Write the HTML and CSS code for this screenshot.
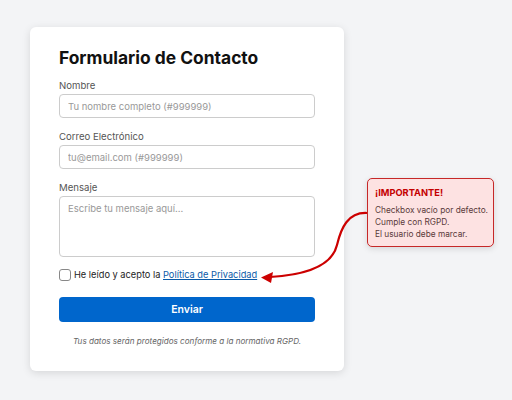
FILE: index.html
```html
<!DOCTYPE html>
<html lang="es">
<head>
  <meta charset="UTF-8">
  <title>Formulario de Contacto</title>
  <meta name="viewport" content="width=device-width, initial-scale=1.0">
  <link rel="stylesheet" href="styles.css">
</head>
<body>

  <div class="page">
    <!-- Formulario -->
    <div class="form-card">
      <h2>Formulario de Contacto</h2>
      <form id="contactForm">
        <label for="nombre">Nombre</label>
        <input type="text" id="nombre" placeholder="Tu nombre completo (#999999)">

        <label for="email">Correo Electrónico</label>
        <input type="text" id="email" placeholder="tu@email.com (#999999)">

        <label for="mensaje">Mensaje</label>
        <textarea id="mensaje" placeholder="Escribe tu mensaje aquí..."></textarea>

        <div class="check-row">
          <input type="checkbox" id="acepto">
          <span>He leído y acepto la <a href="#">Política de Privacidad</a></span>
        </div>

        <button type="submit">Enviar</button>
      </form>
      <p class="note">Tus datos serán protegidos conforme a la normativa RGPD.</p>
    </div>

    <!-- Nota -->
    <div class="callout">
      <strong>¡IMPORTANTE!</strong>
      <p>Checkbox vacío por defecto.<br>Cumple con RGPD.<br>El usuario debe marcar.</p>
    </div>

    <svg class="arrow" width="512" height="400" viewBox="0 0 512 400">
      <path d="M367 213 C 348 212, 341 228, 337 245 C 332 266, 305 275, 270 277" fill="none" stroke="#cc0000" stroke-width="2.2"/>
      <polygon points="261,277.5 273,272 271,283" fill="#cc0000"/>
    </svg>
  </div>

</body>
</html>
```

FILE: styles.css
```css
body {
  background-color: #f3f4f6;
  font-family: Inter, "Noto Sans", sans-serif;
  margin: 0;
  padding: 0;
}

.page {
  position: relative;
  width: 512px;
  height: 400px;
  padding: 27px 0 0 30px;
  box-sizing: border-box;
}

.form-card {
  background-color: white;
  width: 314px;
  box-sizing: border-box;
  padding: 20px 29px 24px;
  border-radius: 6px;
  box-shadow: 0 2px 8px rgba(0,0,0,0.12);
}

.form-card h2 {
  margin: 0 0 10px;
  font-size: 17.4px;
  font-weight: 700;
  color: #111;
  line-height: 22px;
}

label {
  display: block;
  font-size: 9.6px;
  color: #555;
  line-height: 13px;
  margin-bottom: 2px;
}

input[type="text"],
textarea {
  display: block;
  width: 100%;
  box-sizing: border-box;
  height: 24px;
  padding: 0 8px;
  border: 1px solid #ccc;
  border-radius: 4px;
  font-family: inherit;
  font-size: 9.5px;
  color: #333;
  margin-bottom: 12px;
}

textarea {
  height: 61px;
  padding: 6px 8px;
  resize: none;
  margin-bottom: 11px;
}

::placeholder {
  color: #999;
}

.check-row {
  display: flex;
  align-items: center;
  gap: 3px;
  height: 13px;
  font-size: 9.25px;
  color: #222;
}

.check-row input {
  width: 12px;
  height: 12px;
  margin: 0;
  appearance: none;
  border: 1px solid #888;
  border-radius: 3px;
  background: white;
}

.check-row a {
  color: #0a5aa8;
}

button {
  display: block;
  width: 100%;
  height: 25px;
  margin-top: 16px;
  background-color: #0066cc;
  color: white;
  border: none;
  border-radius: 4px;
  font-family: inherit;
  font-size: 10.5px;
  font-weight: 600;
  cursor: pointer;
}

.note {
  margin: 14px 0 0;
  line-height: 11px;
  text-align: center;
  font-size: 8.1px;
  font-style: italic;
  color: #666;
}

.callout {
  position: absolute;
  left: 367px;
  top: 178px;
  width: 127px;
  height: 69px;
  box-sizing: border-box;
  padding: 8px 7px;
  background-color: #fde2e2;
  border: 1px solid #c62828;
  border-radius: 5px;
  box-shadow: 0 2px 6px rgba(0,0,0,0.12);
}

.callout strong {
  display: block;
  font-size: 9.3px;
  color: #c40000;
  line-height: 12px;
}

.callout p {
  margin: 5px 0 0;
  font-size: 8.3px;
  line-height: 12px;
  color: #5a3a3a;
  white-space: nowrap;
}

.arrow {
  position: absolute;
  left: 0;
  top: 0;
  pointer-events: none;
}
```
